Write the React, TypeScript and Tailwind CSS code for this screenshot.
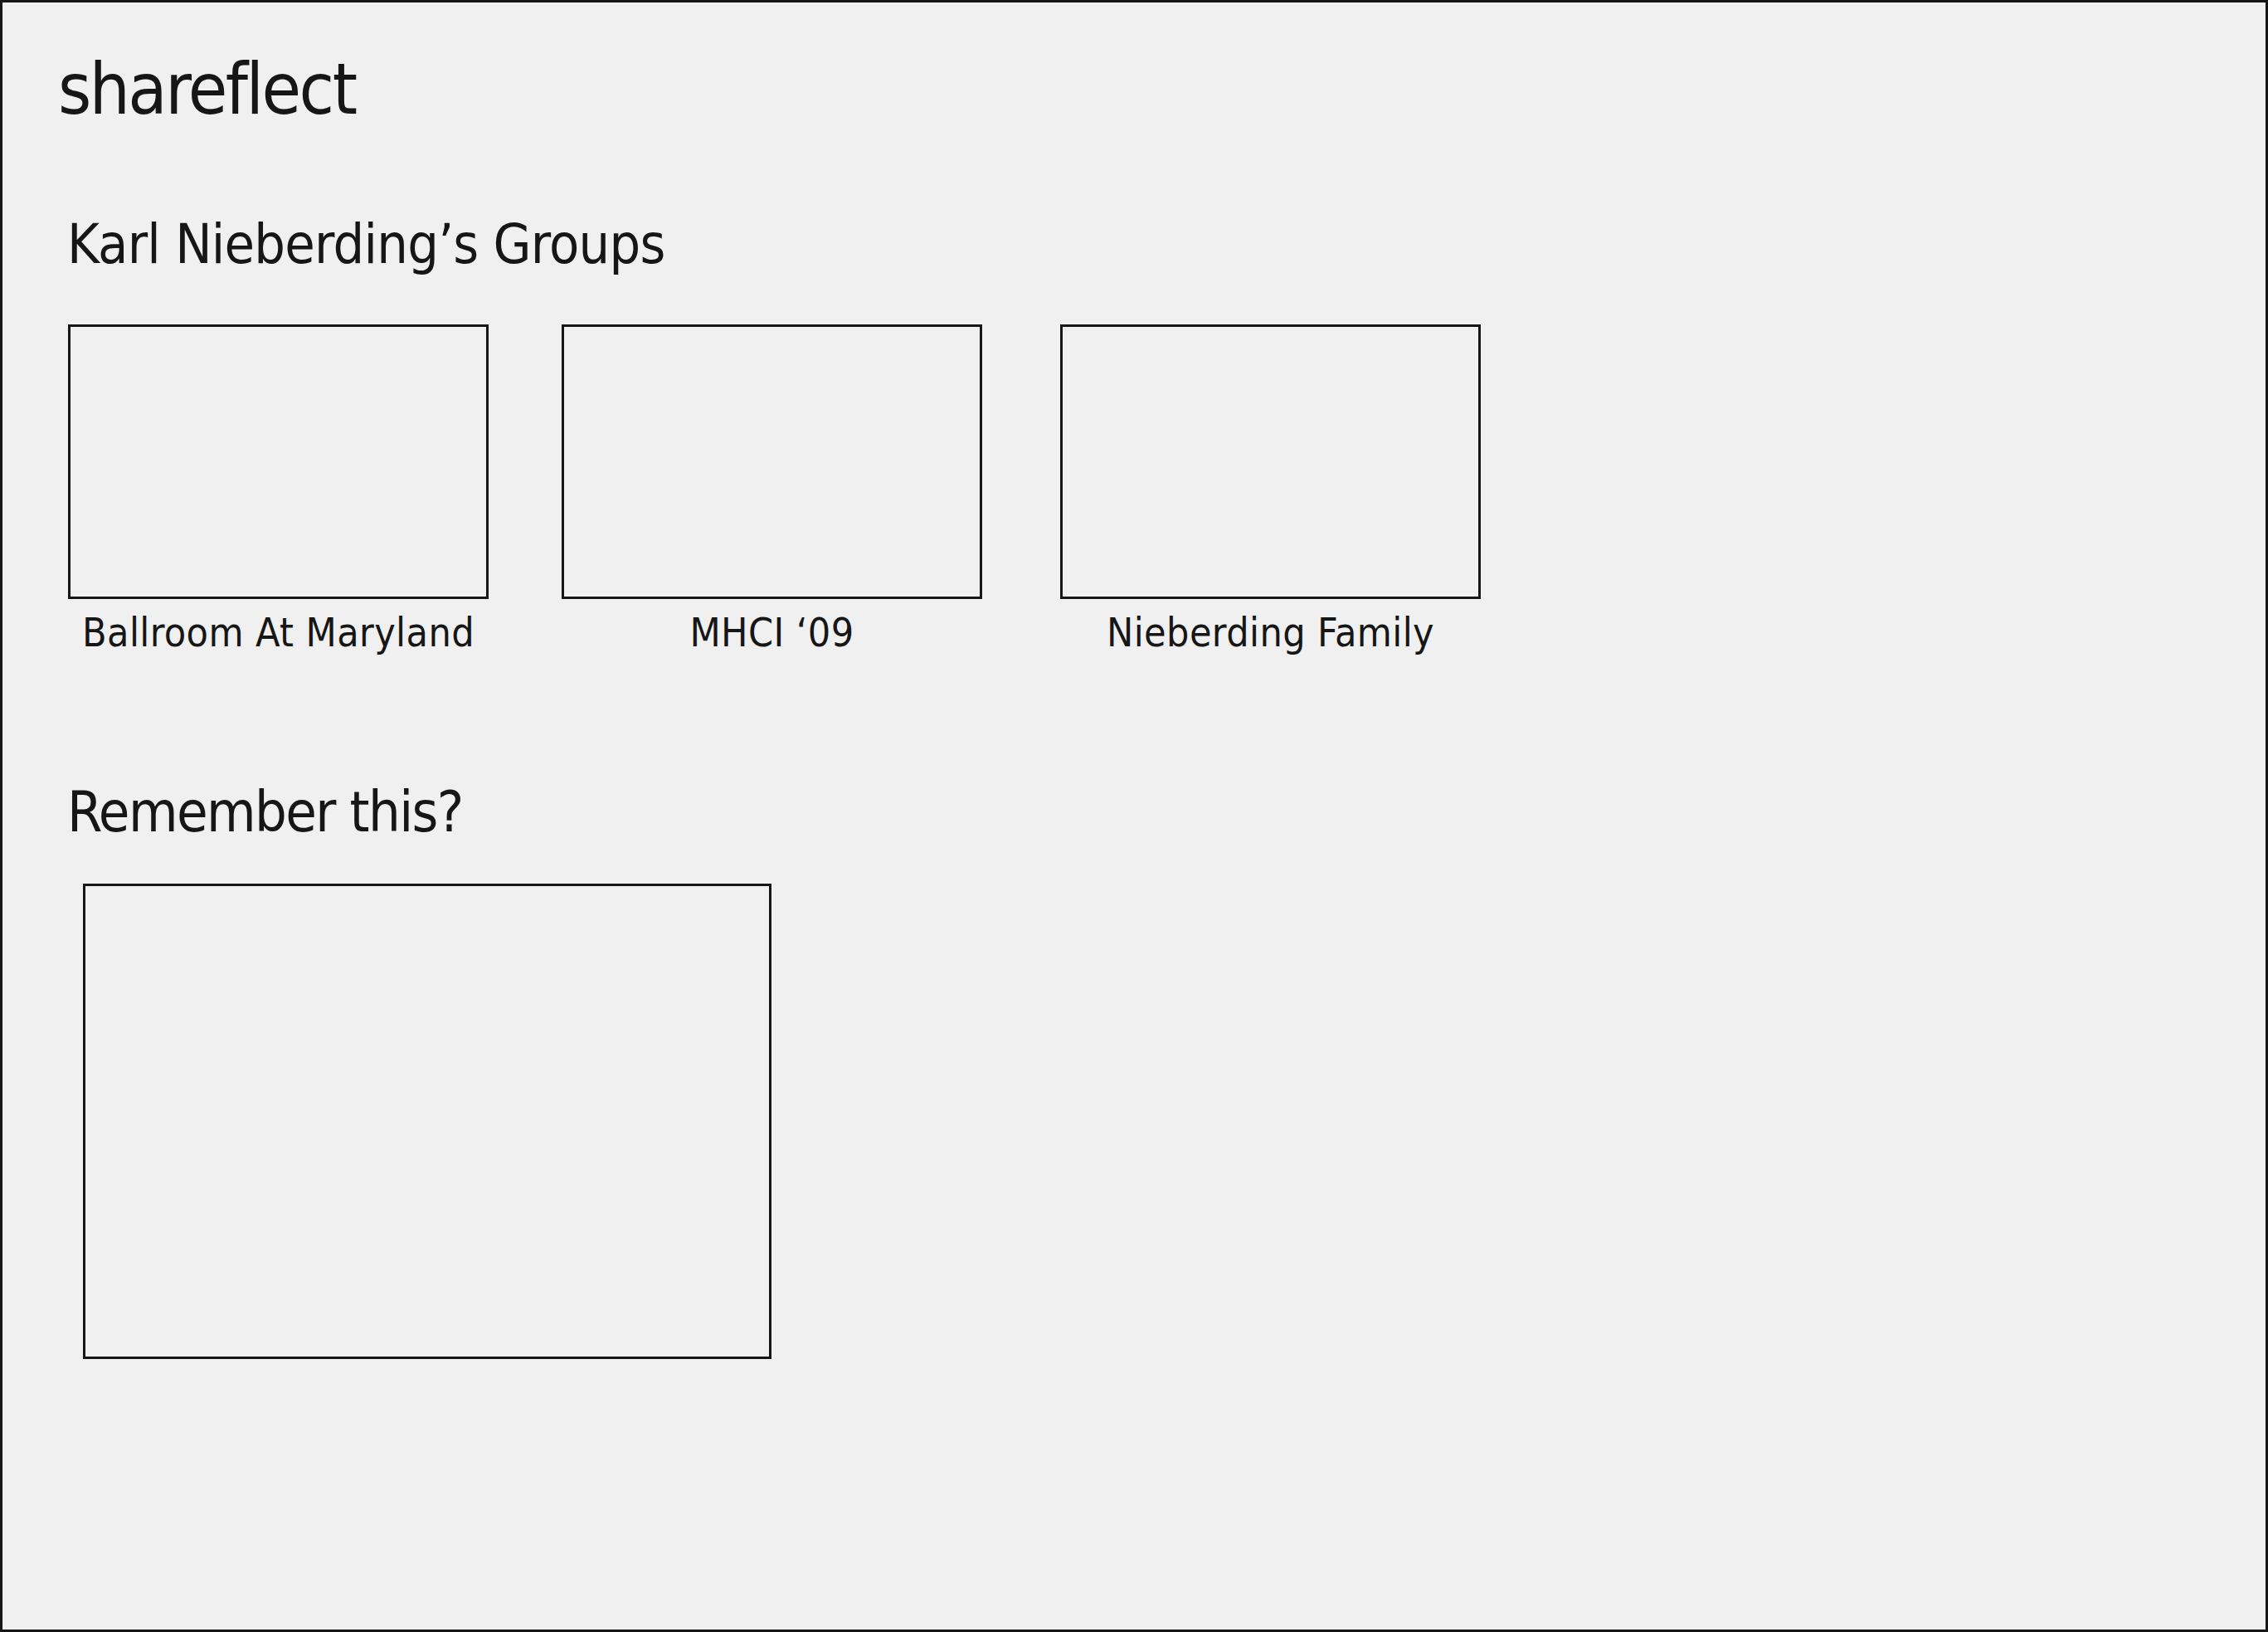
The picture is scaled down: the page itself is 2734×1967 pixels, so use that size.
import React from "react";

const font = { fontFamily: '"DejaVu Sans Condensed", "DejaVu Sans", sans-serif' };

function Group({ label, className }: { label: string; className?: string }) {
  return (
    <div className={`flex flex-col items-center w-[507px] ${className ?? ""}`}>
      <div className="w-full h-[331px] border-[3px] border-[#161616]" />
      <div className="mt-[16px] text-[48px] leading-none tracking-[0.4px] whitespace-nowrap">{label}</div>
    </div>
  );
}

export default function App() {
  return (
    <div
      className="w-full h-[1967px] border-[3px] border-[#161616] bg-[#f0f0f0] text-[#161616] overflow-hidden"
      style={font}
    >
      <div className="flex flex-col items-start pl-[79px] pt-[61px]">
        <div className="-ml-[12px] text-[86px] leading-none tracking-[-2.5px]">shareflect</div>
        <h2 className="-ml-[1px] mt-[112px] text-[66px] leading-none tracking-[-0.75px]">Karl Nieberding’s Groups</h2>
        <div className="flex mt-[63px]">
          <Group label="Ballroom At Maryland" />
          <Group label="MHCI ‘09" className="ml-[88px]" />
          <Group label="Nieberding Family" className="ml-[94px]" />
        </div>
        <h2 className="-ml-[1px] mt-[159px] text-[68px] leading-none tracking-[-1.6px]">Remember this?</h2>
        <div className="ml-[18px] mt-[52px] w-[830px] h-[573px] border-[3px] border-[#161616]" />
      </div>
    </div>
  );
}
